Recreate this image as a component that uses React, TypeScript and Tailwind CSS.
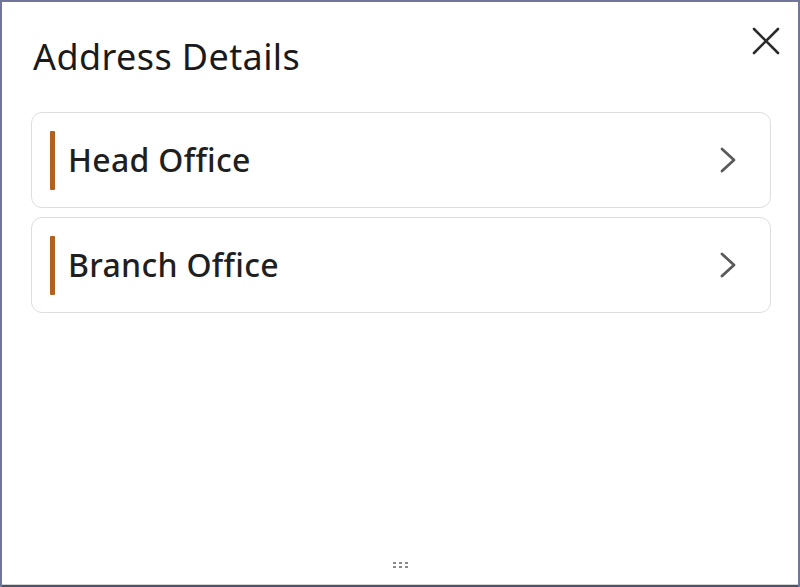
const ChevronRight = () => (
  <svg width="20" height="28" viewBox="0 0 20 28" fill="none" className="text-[#5a5a5a]">
    <path d="M4 3 L16 14 L4 25" stroke="currentColor" strokeWidth="2.8" strokeLinecap="round" strokeLinejoin="round" />
  </svg>
);

const CloseIcon = () => (
  <svg width="30" height="30" viewBox="0 0 30 30" fill="none" className="text-[#2b2b2b]">
    <path d="M3 3 L27 27 M27 3 L3 27" stroke="currentColor" strokeWidth="2.6" strokeLinecap="round" />
  </svg>
);

const AddressCard = ({ label }: { label: string }) => (
  <div className="flex items-center h-[96px] rounded-[11px] border border-[#dedede] bg-white pl-[18px] pr-[32px]">
    <div className="w-[5px] h-[59px] bg-[#b5601c] rounded-[1px]" />
    <span className="ml-[13px] text-[32px] leading-[40px] font-medium tracking-[0.3px] text-[#1f1f1f] flex-1">{label}</span>
    <ChevronRight />
  </div>
);

export default function App() {
  return (
    <div
      className="w-[800px] h-[587px] bg-white border-2 border-b-0 border-[#70759a] flex flex-col overflow-hidden"
      style={{ fontFamily: '"Noto Sans", "Open Sans", sans-serif' }}
    >
      <div className="flex items-start justify-between pl-[31px] pr-[17px] pt-[23px]">
        <h1 className="text-[36px] leading-[48px] mt-[8px] text-[#1a1a1a] font-normal tracking-[0.4px]">Address Details</h1>
        <button className="mt-[1px]">
          <CloseIcon />
        </button>
      </div>
      <div className="flex flex-col gap-[9px] pl-[29px] pr-[27px] mt-[31px]">
        <AddressCard label="Head Office" />
        <AddressCard label="Branch Office" />
      </div>
      <div className="flex-1" />
      <div className="flex justify-center pb-[16px]">
        <div className="grid grid-cols-3 gap-x-[3px] gap-y-[2px]">
          {Array.from({ length: 6 }).map((_, i) => (
            <div key={i} className="w-[3px] h-[2px] bg-[#8a8a8a]" />
          ))}
        </div>
      </div>
      <div className="h-[1px] bg-[#d4d4d4]" />
      <div className="h-[2px] bg-[#4d5170]" />
    </div>
  );
}
